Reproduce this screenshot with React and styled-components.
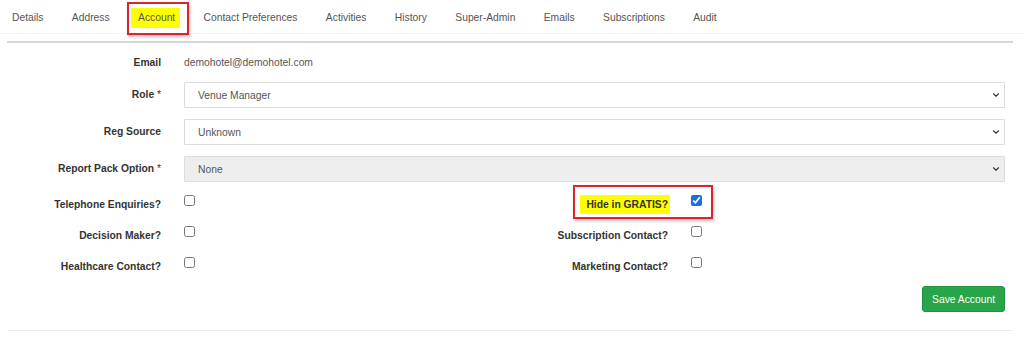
import styled, { createGlobalStyle } from "styled-components";
import { ChevronDown } from "lucide-react";

const GlobalStyle = createGlobalStyle`
    body {
        margin: 0;
        background: #fff;
        font-family: "Liberation Sans", Arial, sans-serif;
    }
`;

const TabBar = styled.nav`
    display: flex;
    height: 33px;
    margin-left: -2.2px;
    border-bottom: 1px solid #f4f4f4;
`;

const Tab = styled.a`
    position: relative;
    display: block;
    padding: 11px 14.2px 8px;
    font-size: 10.3px;
    line-height: 14px;
    color: #555;
    text-decoration: none;
    white-space: nowrap;

    ${props => props.$marked && `
        &::after {
            content: "";
            position: absolute;
            left: 3px;
            right: 0;
            top: 2px;
            bottom: -2px;
            border: 2px solid #d9252b;
            box-shadow: 1px 2px 3px rgba(0,0,0,0.25);
            pointer-events: none;
        }
    `}
`;

// yellow highlight; negative side margins keep the text where it was
const Marker = styled.span`
    background: #ffff00;
    padding: ${props => props.$pad.join("px ")}px;
    margin: 0 -${props => props.$pad[1]}px 0 -${props => props.$pad[3]}px;
`;

const Divider = styled.div`
    height: 2px;
    background: #d2d6dc;
    margin: 7px 11px 0 7px;
`;

const Form = styled.form`
    padding: 10px 19px 0 8px;
`;

const FieldRow = styled.div`
    display: grid;
    grid-template-columns: 153px 1fr;
    column-gap: 23px;
    align-items: center;
    min-height: ${props => props.$height}px;
    margin-bottom: ${props => props.$gap}px;
`;

const Label = styled.label`
    font-size: 10.3px;
    font-weight: bold;
    color: #333;
    text-align: right;
    line-height: 20px;
`;

const Req = styled.span`
    font-weight: normal;
    color: #333;
`;

const StaticValue = styled.div`
    font-size: 10.3px;
    color: #555;
    line-height: 20px;
`;

const SelectWrap = styled.div`
    position: relative;
`;

const Select = styled.select`
    appearance: none;
    width: 100%;
    height: 26px;
    padding: 0 13px;
    border: 1px solid #dcdcdc;
    border-radius: 1px;
    background: ${props => (props.disabled ? "#eee" : "#fff")};
    color: #555;
    font-family: inherit;
    font-size: 10.3px;
    opacity: 1;
`;

const Chevron = styled(ChevronDown)`
    position: absolute;
    right: 4px;
    top: 8px;
    color: #333;
    pointer-events: none;
`;

const CheckGrid = styled.div`
    display: grid;
    grid-template-columns: 507px 1fr;
    row-gap: 11px;
    margin-top: 13px;
`;

const CheckField = styled.div`
    position: relative;
    display: grid;
    grid-template-columns: 153px 1fr;
    column-gap: 23px;
    align-items: start;
    height: 20px;

    ${props => props.$marked && `
        &::after {
            content: "";
            position: absolute;
            left: 58px;
            top: -10px;
            width: 136px;
            height: 30px;
            border: 2px solid #d9252b;
            box-shadow: 1px 2px 3px rgba(0,0,0,0.25);
            pointer-events: none;
        }
    `}
`;

const Checkbox = styled.input.attrs({ type: "checkbox" })`
    width: 11px;
    height: 11px;
    margin: 0;
    accent-color: #1c6fe0;
`;

const Footer = styled.div`
    display: flex;
    justify-content: flex-end;
    margin-top: 9px;
`;

const SaveButton = styled.button`
    height: 26px;
    padding: 0 9px;
    border: 1px solid #21913f;
    border-radius: 3px;
    background: #28a548;
    color: #fff;
    font-family: inherit;
    font-size: 10.3px;
    cursor: pointer;
`;

const BottomRule = styled.div`
    height: 1px;
    background: #ececec;
    margin: 18px 11px 0 8px;
`;

const tabs = ["Details", "Address", "Account", "Contact Preferences", "Activities", "History", "Super-Admin", "Emails", "Subscriptions", "Audit"];

const checks = [
    { label: "Telephone Enquiries?" },
    { label: "Hide in GRATIS?", checked: true, marked: true },
    { label: "Decision Maker?" },
    { label: "Subscription Contact?" },
    { label: "Healthcare Contact?" },
    { label: "Marketing Contact?" },
];

function SelectField({ label, required, value, disabled }) {
    return (
        <FieldRow $height={26} $gap={11}>
            <Label>{label}{required && <Req> *</Req>}</Label>
            <SelectWrap>
                <Select disabled={disabled} defaultValue={value}>
                    <option>{value}</option>
                </Select>
                <Chevron size={10} strokeWidth={2.6} />
            </SelectWrap>
        </FieldRow>
    );
}

export default function App() {
    return (
        <>
            <GlobalStyle />
            <TabBar>
                {tabs.map(t => (
                    t === "Account"
                        ? <Tab key={t} $marked><Marker $pad={[4, 5, 5, 7]}>{t}</Marker></Tab>
                        : <Tab key={t}>{t}</Tab>
                ))}
            </TabBar>
            <Divider />
            <Form onSubmit={ev => ev.preventDefault()}>
                <FieldRow $height={20} $gap={9}>
                    <Label>Email</Label>
                    <StaticValue>demohotel@demohotel.com</StaticValue>
                </FieldRow>
                <SelectField label="Role" required value="Venue Manager" />
                <SelectField label="Reg Source" value="Unknown" />
                <SelectField label="Report Pack Option" required value="None" disabled />
                <CheckGrid>
                    {checks.map(c => (
                        <CheckField key={c.label} $marked={c.marked}>
                            <Label>
                                {c.marked ? <Marker $pad={[4, 2, 4, 6]}>{c.label}</Marker> : c.label}
                            </Label>
                            <Checkbox defaultChecked={c.checked} />
                        </CheckField>
                    ))}
                </CheckGrid>
                <Footer>
                    <SaveButton type="submit">Save Account</SaveButton>
                </Footer>
            </Form>
            <BottomRule />
        </>
    );
}
